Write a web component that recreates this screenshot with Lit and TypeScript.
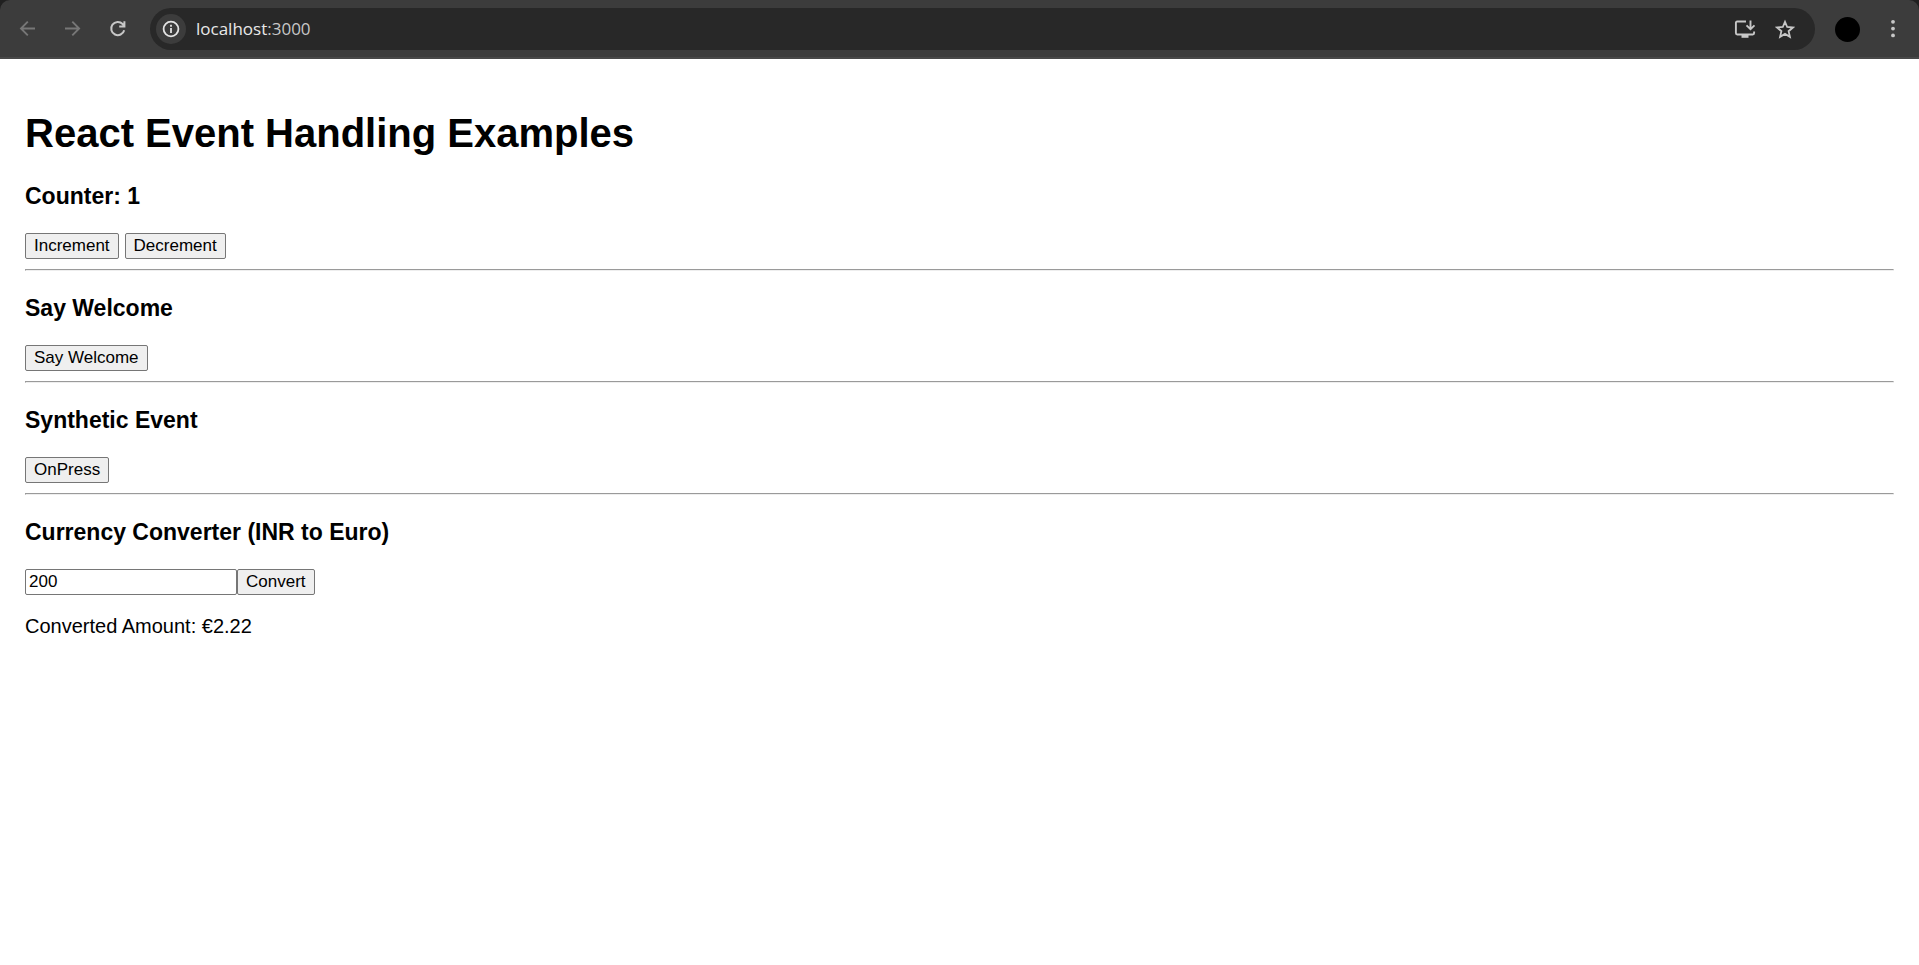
import { LitElement, html, css } from "lit";
import { customElement, state } from "lit/decorators.js";

const INR_PER_EURO = 90;

@customElement("browser-bar")
export class BrowserBar extends LitElement {
  static styles = css`
    :host {
      display: block;
      background: #202020;
      font-family: "Open Sans", "Noto Sans", sans-serif;
    }
    .bar {
      display: flex;
      align-items: center;
      box-sizing: border-box;
      padding: 8px 13px 7px 10px;
      background: #3c3c3c;
      border-bottom: 2px solid #484848;
      border-radius: 10px 10px 0 0;
    }
    button {
      display: grid;
      place-items: center;
      flex: none;
      padding: 0;
      border: 0;
      background: none;
      color: #c7c7c7;
    }
    svg {
      display: block;
      fill: none;
      stroke: currentColor;
    }
    .nav {
      display: flex;
      gap: 9px;
      margin-right: 14px;
    }
    .nav button {
      width: 36px;
      height: 36px;
    }
    .nav button:disabled {
      color: #777777;
    }
    .address {
      display: flex;
      align-items: center;
      flex: 1;
      height: 42px;
      box-sizing: border-box;
      padding: 0 10px 0 6px;
      border-radius: 21px;
      background: #282828;
    }
    .info {
      width: 30px;
      height: 30px;
      border-radius: 50%;
      background: #3c3c3c;
      color: #e3e3e3;
    }
    .url {
      flex: 1;
      margin-left: 10px;
      font-size: 17px;
      line-height: 24px;
      color: #c7c7c7;
    }
    .host {
      color: #e8e8e8;
    }
    .action {
      width: 40px;
      height: 30px;
    }
    .profile {
      width: 25px;
      height: 25px;
      margin: 0 19px 0 20px;
      border-radius: 50%;
      background: #000000;
    }
    .menu {
      width: 27px;
      height: 36px;
    }
  `;

  render() {
    return html`
      <header class="bar">
        <nav class="nav">
          <button disabled aria-label="Back">
            <svg width="20" height="20" viewBox="0 0 20 20" stroke-width="1.9">
              <path d="M17 9.5H3.6M9.8 2.7L3 9.5l6.8 6.8" />
            </svg>
          </button>
          <button disabled aria-label="Forward">
            <svg width="20" height="20" viewBox="0 0 20 20" stroke-width="1.9">
              <path d="M2 9.5h13.4M9.3 2.7l6.8 6.8-6.8 6.8" />
            </svg>
          </button>
          <button aria-label="Reload">
            <svg width="20" height="20" viewBox="0 0 20 20" stroke-width="2">
              <path d="M16.2 11.2A6.6 6.6 0 1 1 14.6 5L16.2 6.8M16.4 2.2V7.4H11.2" />
            </svg>
          </button>
        </nav>
        <div class="address">
          <button class="info" aria-label="Site information">
            <svg width="18" height="18" viewBox="0 0 18 18" stroke-width="1.8">
              <circle cx="9" cy="9" r="7.4" />
              <path d="M9 8v5M9 4.8v1.9" />
            </svg>
          </button>
          <div class="url"><span class="host">localhost</span>:3000</div>
          <button class="action" aria-label="Install app">
            <svg width="22" height="20" viewBox="0 0 22 20" stroke-width="1.9">
              <path d="M12 2.5H3.2Q1.9 2.5 1.9 3.8V14.1Q1.9 15.5 3.2 15.5H18.8Q20.1 15.5 20.1 14.1V12.5" />
              <path d="M16.5 1.5V9.8M12.5 6.4L16.5 10.2L20.5 6.4" />
              <path d="M7.5 15.6h7v3.2h-7z" fill="currentColor" stroke="none" />
            </svg>
          </button>
          <button class="action" aria-label="Bookmark this page">
            <svg width="20" height="20" viewBox="0 0 20 20" stroke-width="1.8">
              <path d="M10 2.8l2.2 5.2 5.7.5-4.3 3.7 1.3 5.6L10 14.9l-4.9 2.9 1.3-5.6L2.1 8.5l5.7-.5z" />
            </svg>
          </button>
        </div>
        <button class="profile" aria-label="Profile"></button>
        <button class="menu" aria-label="Menu">
          <svg width="6" height="20" viewBox="0 0 6 20">
            <g fill="currentColor" stroke="none">
              <circle cx="3" cy="2.8" r="1.9" />
              <circle cx="3" cy="9.6" r="1.9" />
              <circle cx="3" cy="16.4" r="1.9" />
            </g>
          </svg>
        </button>
      </header>
    `;
  }
}

@customElement("app-root")
export class AppRoot extends LitElement {
  static styles = css`
    :host {
      display: block;
      min-height: 100vh;
      background: #ffffff;
      color: #000000;
      font-family: "Liberation Sans", Arial, sans-serif;
      font-size: 20px;
      line-height: 24px;
    }
    main {
      padding: 51px 25px 25px;
    }
    h1 {
      margin: 0 0 27px;
      font-size: 40px;
      line-height: 46px;
    }
    h3 {
      margin: 0 0 23px;
      font-size: 23px;
      line-height: 27px;
    }
    .row {
      display: flex;
    }
    .spaced {
      gap: 6px;
    }
    hr {
      margin: 10px 0 24px;
      border: 1px solid;
      border-color: #9a9a9a #eeeeee #eeeeee #9a9a9a;
    }
    button,
    input {
      box-sizing: border-box;
      height: 26px;
      margin: 0;
      font-family: inherit;
      font-size: 17px;
      line-height: 20px;
      color: #000000;
      border: 1px solid #767676;
      border-radius: 2px;
    }
    button {
      padding: 0 8px;
      background: #efefef;
    }
    input {
      width: 212px;
      padding: 0 3px;
      background: #ffffff;
    }
    p {
      margin: 19px 0 0;
    }
  `;

  @state() private count = 1;
  @state() private rupees = "200";
  @state() private euros = (200 / INR_PER_EURO).toFixed(2);

  private convert() {
    this.euros = (Number(this.rupees) / INR_PER_EURO).toFixed(2);
  }

  render() {
    return html`
      <browser-bar></browser-bar>
      <main>
        <h1>React Event Handling Examples</h1>
        <section>
          <h3>Counter: ${this.count}</h3>
          <div class="row spaced">
            <button @click=${() => this.count++}>Increment</button>
            <button @click=${() => this.count--}>Decrement</button>
          </div>
        </section>
        <hr />
        <section>
          <h3>Say Welcome</h3>
          <div class="row"><button>Say Welcome</button></div>
        </section>
        <hr />
        <section>
          <h3>Synthetic Event</h3>
          <div class="row"><button>OnPress</button></div>
        </section>
        <hr />
        <section>
          <h3 id="converter">Currency Converter (INR to Euro)</h3>
          <div class="row">
            <input
              type="text"
              aria-labelledby="converter"
              .value=${this.rupees}
              @input=${(e: Event) => (this.rupees = (e.target as HTMLInputElement).value)}
            />
            <button @click=${this.convert}>Convert</button>
          </div>
          <p>Converted Amount: €${this.euros}</p>
        </section>
      </main>
    `;
  }
}
